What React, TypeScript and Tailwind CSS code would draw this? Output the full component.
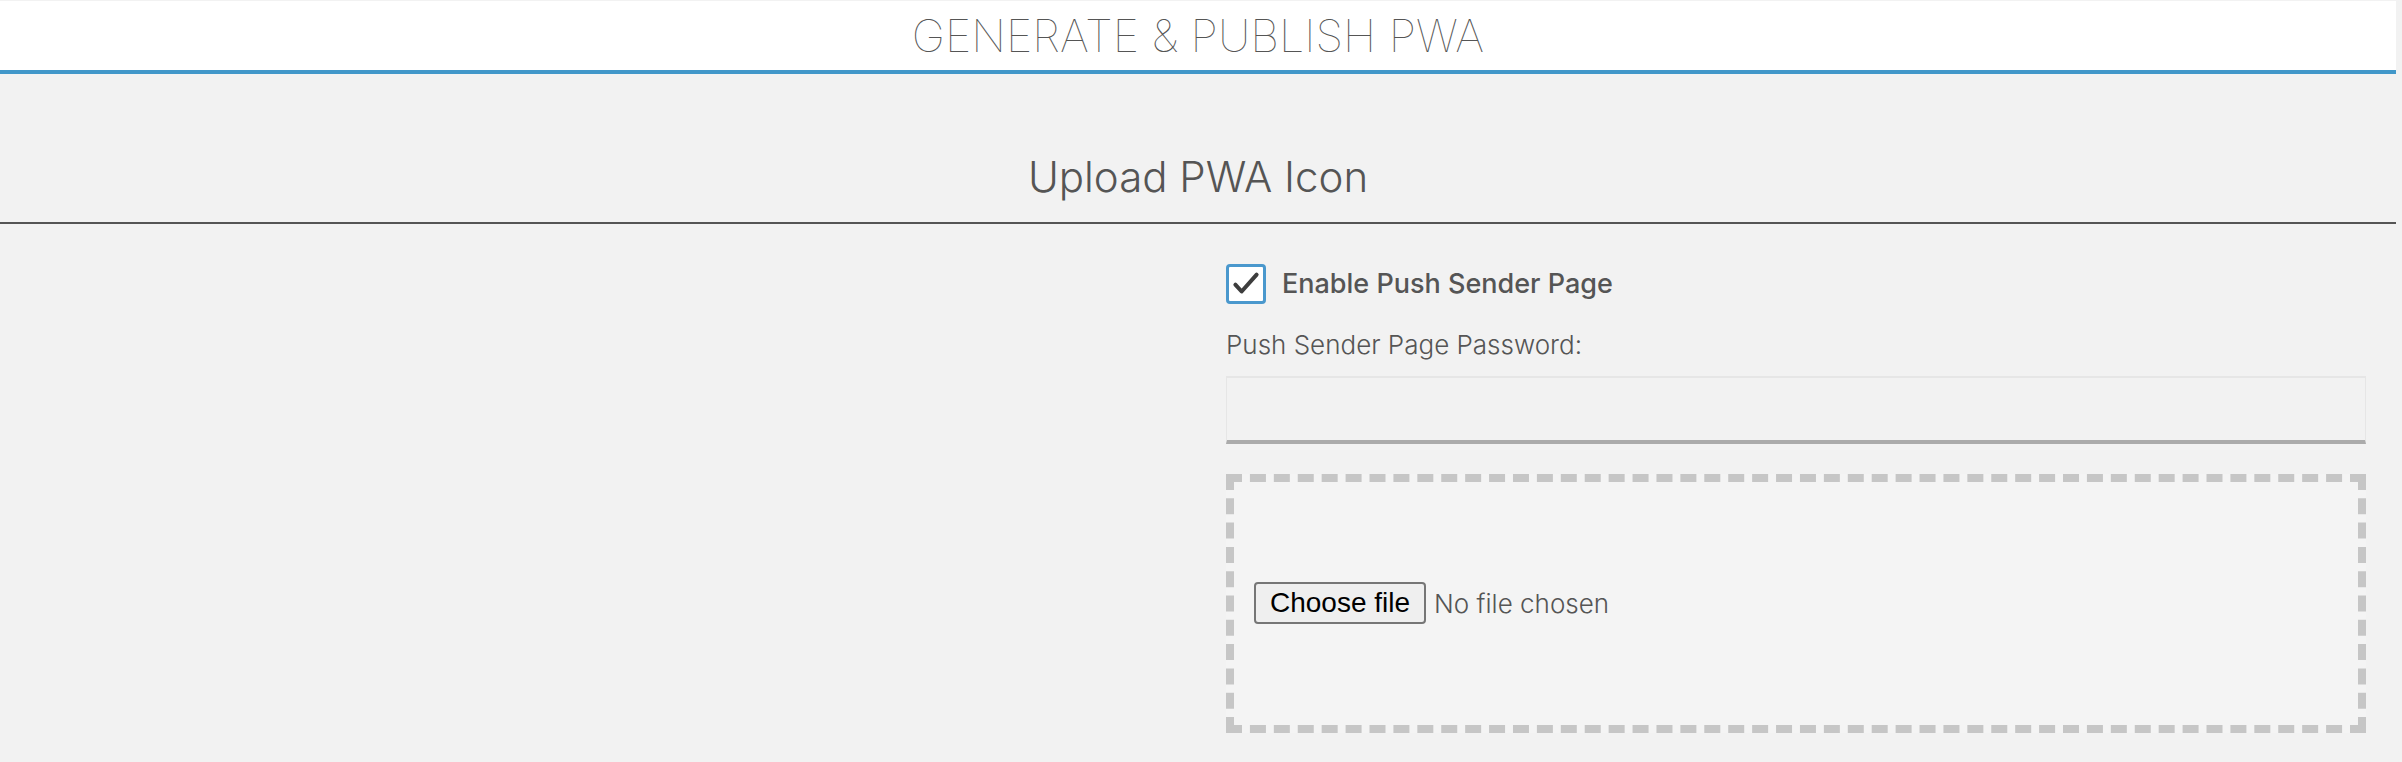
import React from 'react';

const sans = "font-['Helvetica_Neue',Inter,'Liberation_Sans',sans-serif]";

export default function App() {
  return (
    <div className={`min-h-screen w-full bg-[#f2f2f2] pt-px text-[#555] ${sans}`}>
      {/* Top header */}
      <header className="w-[2396px] h-[73px] bg-white border-b-4 border-[#4197c9] flex items-center justify-center">
        <h1 className="text-[45px] font-thin leading-none">GENERATE &amp; PUBLISH PWA</h1>
      </header>

      {/* Section title */}
      <div className="w-[2396px] pt-[76px] pb-[18px] border-b-2 border-[#555] text-center">
        <h2 className="text-[42px] font-light leading-[54px]">Upload PWA Icon</h2>
      </div>

      <div className="w-[2396px] grid grid-cols-2">
        {/* Left column: empty preview area */}
        <div />

        {/* Right column: settings */}
        <div className="pl-[28px] pr-[30px] pt-[40px]">
          <label className="flex items-center gap-[16px]">
            <span className="w-[40px] h-[40px] rounded-[4px] border-[3px] border-[#4a98cd] bg-white flex items-center justify-center">
              <svg width="30" height="30" viewBox="0 0 24 24" fill="none" stroke="#3d3d3d" strokeWidth="3.2" strokeLinecap="round" strokeLinejoin="round">
                <path d="M3.5 12.5l5 5.5L20.5 4.5" />
              </svg>
            </span>
            <span className="text-[27px] font-medium">Enable Push Sender Page</span>
          </label>

          <p className="mt-[22px] text-[26px] font-light leading-[36px]">Push Sender Page Password:</p>

          <input
            type="password"
            className="mt-[13px] block w-full h-[68px] bg-[#f2f2f2] border-t-2 border-x border-[#e6e6e6] border-b-4 border-b-[#ababab] outline-none"
          />

          <div className="mt-[30px] h-[259px] border-8 border-dashed border-[#c6c6c6] bg-[#f4f4f4] flex items-center pl-[20px]">
            <div className="flex items-center gap-[8px]">
              <button className="h-[42px] px-[14px] rounded-[4px] border-2 border-[#767676] bg-[#efefef] text-black text-[28px] font-['Liberation_Sans',Arial,sans-serif] leading-none">
                Choose file
              </button>
              <span className="text-[26px] font-light">No file chosen</span>
            </div>
          </div>
        </div>
      </div>
    </div>
  );
}
